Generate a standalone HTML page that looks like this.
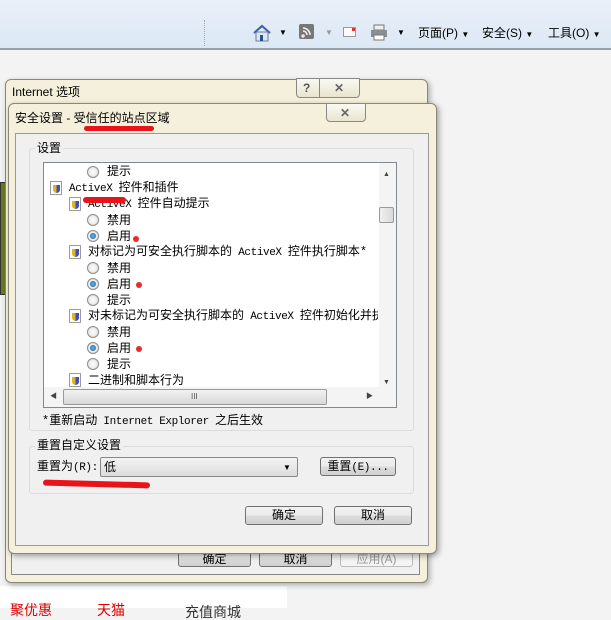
<!DOCTYPE html>
<html><head><meta charset="utf-8"><style>
*{margin:0;padding:0;box-sizing:border-box}
body{width:611px;height:608px;overflow:hidden;background:#f3f3f3;font-family:"Liberation Sans","Noto Sans CJK SC",sans-serif;font-size:12px;color:#000;position:relative}
.a{position:absolute}
.t{position:absolute;white-space:nowrap;line-height:16px}
.mono{font-family:"Liberation Mono","Noto Sans CJK SC",monospace;font-size:12px}
.mono i{font-style:normal;font-size:11px;letter-spacing:-0.4px}
.btn{position:absolute;border:1px solid #707070;border-radius:3px;background:linear-gradient(#f2f2f2,#ebebeb 50%,#dddddd 51%,#cfcfcf);text-align:center;line-height:16px;font-size:12px}
.radio{position:absolute;width:12px;height:12px;border-radius:50%;border:1px solid #8a8a8a;background:radial-gradient(#fff,#dcdcdc)}
.radio.on::after{content:"";position:absolute;left:2px;top:2px;width:6px;height:6px;border-radius:50%;background:radial-gradient(#6ab6e8,#1a5f9c)}
.ico{position:absolute;width:12px;height:14px;background:#fff;border:1px solid #9a9a9a}
.ico::after{content:"";position:absolute;left:2px;top:3px;width:7px;height:8px;border-radius:0 0 4px 4px;background:linear-gradient(90deg,#e8b020 50%,#3a4fc0 50%)}
.red{position:absolute;background:#e8141c;border-radius:3px}
.dot{position:absolute;width:6px;height:6px;border-radius:50%;background:#f02828}
</style></head><body>
<div class="a" style="left:0;top:0;width:611px;height:48px;background:linear-gradient(#e9f0f9,#dce8f5)"></div>
<div class="a" style="left:0;top:48px;width:611px;height:2px;background:#9aa0a8"></div>
<div class="a" style="left:204px;top:20px;height:26px;border-left:1px dotted #9aa"></div>
<svg class="a" style="left:252px;top:23px" width="20" height="20"><path d="M2 10 L10 3 L18 10" fill="none" stroke="#3a5fa8" stroke-width="2"/><rect x="4" y="9" width="12" height="9" fill="#dfe6f0" stroke="#6a7f9e"/><rect x="8" y="12" width="3" height="6" fill="#2a4f98"/></svg>
<div class="t" style="left:279px;top:25px;font-size:8px">▼</div>
<svg class="a" style="left:299px;top:24px" width="16" height="16"><rect width="15" height="15" rx="2" fill="#777"/><path d="M4 11a1 1 0 1 0 0.1 0M4 7a4 4 0 0 1 4 4M4 4a7 7 0 0 1 7 7" stroke="#eee" stroke-width="1.6" fill="none"/></svg>
<div class="t" style="left:325px;top:25px;font-size:8px;color:#999">▼</div>
<div class="a" style="left:343px;top:27px;width:13px;height:10px;border:1px solid #999;background:#fafafa"></div><div class="a" style="left:352px;top:28px;width:3px;height:3px;background:#d33"></div>
<svg class="a" style="left:370px;top:24px" width="18" height="17"><rect x="4" y="1" width="10" height="5" fill="#eee" stroke="#777"/><rect x="1" y="6" width="16" height="7" fill="#8a8f96"/><rect x="4" y="11" width="10" height="5" fill="#fff" stroke="#777"/></svg>
<div class="t" style="left:397px;top:25px;font-size:8px">▼</div>
<div class="t" style="left:418px;top:25px">页面(P) <span style="font-size:8px">▼</span></div>
<div class="t" style="left:482px;top:25px">安全(S) <span style="font-size:8px">▼</span></div>
<div class="t" style="left:548px;top:25px">工具(O) <span style="font-size:8px">▼</span></div>

<div class="a" style="left:0;top:182px;width:10px;height:113px;background:#6a7a20;border:1px solid #333"></div>
<div class="a" style="left:0;top:586px;width:287px;height:22px;background:#fff"></div>
<div class="t" style="left:10px;top:602px;color:#d00;font-size:14px">聚优惠</div>
<div class="t" style="left:97px;top:602px;color:#d00;font-size:14px">天猫</div>
<div class="t" style="left:185px;top:604px;color:#333;font-size:14px">充值商城</div>

<div class="a" style="left:5px;top:79px;width:423px;height:504px;background:#f4f0dc;border:1px solid #8a8878;border-radius:6px;box-shadow:2px 2px 6px rgba(0,0,0,.3)"></div>
<div class="t" style="left:12px;top:84px;font-size:12px">Internet 选项</div>
<div class="a" style="left:296px;top:78px;width:64px;height:20px;border:1px solid #888;border-radius:0 0 4px 4px;background:linear-gradient(#fbfaf2,#e8e4d0)"></div>
<div class="a" style="left:319px;top:78px;width:1px;height:20px;background:#888"></div>
<div class="t" style="left:303px;top:80px;font-weight:bold;color:#555">?</div>
<div class="t" style="left:334px;top:80px;font-weight:bold;color:#666">✕</div>
<div class="a" style="left:11px;top:130px;width:409px;height:445px;background:#f0f0f0;border:1px solid #888"></div>
<div class="btn" style="left:178px;top:550px;width:73px;height:17px">确定</div>
<div class="btn" style="left:259px;top:550px;width:73px;height:17px">取消</div>
<div class="btn" style="left:340px;top:550px;width:73px;height:17px;color:#999;border-color:#bbb;background:#f4f4f4">应用(A)</div>

<div class="a" style="left:8px;top:103px;width:429px;height:451px;background:#f4f0dc;border:1px solid #8a8878;border-radius:6px;box-shadow:2px 2px 6px rgba(0,0,0,.35)"></div>
<div class="t" style="left:15px;top:110px">安全设置 - 受信任的站点区域</div>
<div class="a" style="left:326px;top:103px;width:40px;height:19px;border:1px solid #888;border-radius:0 0 4px 4px;background:linear-gradient(#fbfaf2,#e8e4d0)"></div>
<div class="t" style="left:340px;top:105px;font-weight:bold;color:#666">✕</div>
<div class="red" style="left:84px;top:126px;width:70px;height:5px"></div>
<div class="a" style="left:15px;top:133px;width:414px;height:413px;background:#f0f0f0;border:1px solid #999"></div>

<div class="a" style="left:29px;top:148px;width:385px;height:283px;border:1px solid #dcdcdc;border-radius:3px"></div>
<div class="t" style="left:35px;top:140px;background:#f0f0f0;padding:0 2px">设置</div>
<div class="a" style="left:43px;top:162px;width:354px;height:246px;background:#fff;border:1px solid #828790"></div>
<div class="a" style="left:379px;top:163px;width:17px;height:224px;background:#f4f4f4"></div>
<div class="t" style="left:383px;top:167px;font-size:7px;color:#444">▲</div>
<div class="t" style="left:383px;top:375px;font-size:7px;color:#444">▼</div>
<div class="a" style="left:379px;top:207px;width:15px;height:16px;border:1px solid #999;border-radius:2px;background:linear-gradient(90deg,#f0f0f0,#dadada)"></div>
<div class="a" style="left:44px;top:387px;width:352px;height:20px;background:#f4f4f4"></div>
<div class="a" style="left:63px;top:389px;width:264px;height:16px;border:1px solid #999;border-radius:2px;background:linear-gradient(#f2f2f2,#d8d8d8)"></div>
<div class="t" style="left:50px;top:389px;font-size:7px;color:#444">◀</div>
<div class="t" style="left:366px;top:389px;font-size:7px;color:#444">▶</div>
<div class="t" style="left:191px;top:389px;font-size:8px;color:#555">III</div>

<div class="a" style="left:44px;top:163px;width:334px;height:224px;overflow:hidden">
<div style="position:relative;left:-44px;top:-163px">
<div class="radio" style="left:87px;top:166px"></div><div class="t" style="left:107px;top:163px">提示</div>
<div class="ico" style="left:50px;top:181px"></div><div class="t mono" style="left:69px;top:180px"><i>ActiveX </i>控件和插件</div>
<div class="ico" style="left:69px;top:197px"></div><div class="t mono" style="left:88px;top:196px"><i>ActiveX </i>控件自动提示</div>
<div class="radio" style="left:87px;top:214px"></div><div class="t" style="left:107px;top:212px">禁用</div>
<div class="radio on" style="left:87px;top:230px"></div><div class="t" style="left:107px;top:228px">启用</div>
<div class="ico" style="left:69px;top:245px"></div><div class="t mono" style="left:88px;top:244px">对标记为可安全执行脚本的<i> ActiveX </i>控件执行脚本*</div>
<div class="radio" style="left:87px;top:262px"></div><div class="t" style="left:107px;top:260px">禁用</div>
<div class="radio on" style="left:87px;top:278px"></div><div class="t" style="left:107px;top:276px">启用</div>
<div class="radio" style="left:87px;top:294px"></div><div class="t" style="left:107px;top:292px">提示</div>
<div class="ico" style="left:69px;top:309px"></div><div class="t mono" style="left:88px;top:308px">对未标记为可安全执行脚本的<i> ActiveX </i>控件初始化并执行</div>
<div class="radio" style="left:87px;top:326px"></div><div class="t" style="left:107px;top:324px">禁用</div>
<div class="radio on" style="left:87px;top:342px"></div><div class="t" style="left:107px;top:340px">启用</div>
<div class="radio" style="left:87px;top:358px"></div><div class="t" style="left:107px;top:356px">提示</div>
<div class="ico" style="left:69px;top:373px"></div><div class="t" style="left:88px;top:372px">二进制和脚本行为</div>
</div></div>
<div class="red" style="left:83px;top:197px;width:43px;height:6px"></div>
<div class="dot" style="left:133px;top:236px"></div>
<div class="dot" style="left:136px;top:282px"></div>
<div class="dot" style="left:136px;top:346px"></div>

<div class="t mono" style="left:42px;top:413px">*重新启动<i> Internet Explorer </i>之后生效</div>

<div class="a" style="left:29px;top:446px;width:385px;height:48px;border:1px solid #dcdcdc;border-radius:3px"></div>
<div class="t" style="left:35px;top:437px;background:#f0f0f0;padding:0 2px">重置自定义设置</div>
<div class="t" style="left:37px;top:458px">重置为<span class="mono"><i>(R):</i></span></div>
<div class="a" style="left:100px;top:457px;width:198px;height:20px;border:1px solid #888;border-radius:2px;background:linear-gradient(#f4f4f4,#dcdcdc)"></div>
<div class="t" style="left:104px;top:459px">低</div>
<div class="t" style="left:283px;top:460px;font-size:8px">▼</div>
<div class="btn" style="left:320px;top:457px;width:76px;height:19px">重置<span class="mono"><i>(E)...</i></span></div>
<div class="red" style="left:43px;top:481px;width:107px;height:6px;transform:rotate(1.5deg)"></div>

<div class="btn" style="left:245px;top:506px;width:78px;height:19px">确定</div>
<div class="btn" style="left:334px;top:506px;width:78px;height:19px">取消</div>
</body></html>
